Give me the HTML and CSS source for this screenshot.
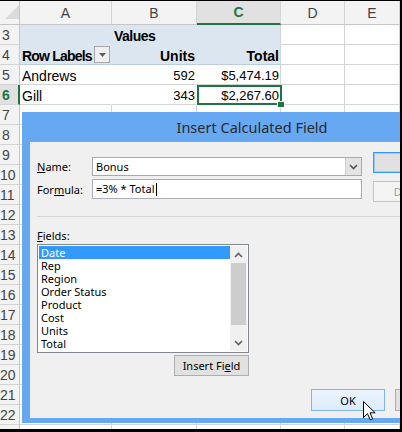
FILE: index.html
```html
<!DOCTYPE html>
<html>
<head>
<meta charset="utf-8">
<link rel="stylesheet" href="styles.css">
</head>
<body>
<div class="screen">
  <div class="sheet">
    <div class="corner"><svg width="14" height="14" viewBox="0 0 14 14"><path d="M14 0V14H0Z" fill="#dadada"/></svg></div>
    <div class="ch">A</div><div class="ch">B</div><div class="ch on">C</div><div class="ch">D</div><div class="ch">E</div>

    <div class="rh">3</div><div class="c pv"></div><div class="c pv b vals">Values</div><div class="c pv pe"></div><div class="c"></div><div class="c"></div>
    <div class="rh">4</div><div class="c pv p4 b rl"><span class="rltxt">Row Labels</span><span class="filt"><svg width="7" height="4" viewBox="0 0 7 4"><path d="M0 0H7L3.5 4Z" fill="#606060"/></svg></span></div><div class="c pv p4 b r">Units</div><div class="c pv p4 pe b r">Total</div><div class="c"></div><div class="c"></div>
    <div class="rh">5</div><div class="c nv">Andrews</div><div class="c nv r num">592</div><div class="c r num">$5,474.19</div><div class="c"></div><div class="c"></div>
    <div class="rh on">6</div><div class="c nv">Gill</div><div class="c nv r num">343</div><div class="c r num sel">$2,267.60</div><div class="c"></div><div class="c"></div>
    <div class="rh">7</div><div class="c"></div><div class="c"></div><div class="c"></div><div class="c"></div><div class="c"></div>
    <div class="rh">8</div><div class="c"></div><div class="c"></div><div class="c"></div><div class="c"></div><div class="c"></div>
    <div class="rh">9</div><div class="c"></div><div class="c"></div><div class="c"></div><div class="c"></div><div class="c"></div>
    <div class="rh">10</div><div class="c"></div><div class="c"></div><div class="c"></div><div class="c"></div><div class="c"></div>
    <div class="rh">11</div><div class="c"></div><div class="c"></div><div class="c"></div><div class="c"></div><div class="c"></div>
    <div class="rh">12</div><div class="c"></div><div class="c"></div><div class="c"></div><div class="c"></div><div class="c"></div>
    <div class="rh">13</div><div class="c"></div><div class="c"></div><div class="c"></div><div class="c"></div><div class="c"></div>
    <div class="rh">14</div><div class="c"></div><div class="c"></div><div class="c"></div><div class="c"></div><div class="c"></div>
    <div class="rh">15</div><div class="c"></div><div class="c"></div><div class="c"></div><div class="c"></div><div class="c"></div>
    <div class="rh">16</div><div class="c"></div><div class="c"></div><div class="c"></div><div class="c"></div><div class="c"></div>
    <div class="rh">17</div><div class="c"></div><div class="c"></div><div class="c"></div><div class="c"></div><div class="c"></div>
    <div class="rh">18</div><div class="c"></div><div class="c"></div><div class="c"></div><div class="c"></div><div class="c"></div>
    <div class="rh">19</div><div class="c"></div><div class="c"></div><div class="c"></div><div class="c"></div><div class="c"></div>
    <div class="rh">20</div><div class="c"></div><div class="c"></div><div class="c"></div><div class="c"></div><div class="c"></div>
    <div class="rh">21</div><div class="c"></div><div class="c"></div><div class="c"></div><div class="c"></div><div class="c"></div>
    <div class="rh">22</div><div class="c"></div><div class="c"></div><div class="c"></div><div class="c"></div><div class="c"></div>
    <div class="rh">23</div><div class="c"></div><div class="c"></div><div class="c"></div><div class="c"></div><div class="c"></div>
  </div>

  <div class="dlg">
    <div class="title">Insert Calculated Field</div>
    <div class="body">
      <div class="top">
        <div class="form">
          <div class="lbl"><u>N</u>ame:</div>
          <div class="combo"><span class="val">Bonus</span><span class="dd"><svg width="9" height="6" viewBox="0 0 9 6"><path d="M1 1L4.5 4.5L8 1" fill="none" stroke="#555" stroke-width="1.6"/></svg></span></div>
          <div class="lbl">For<u>m</u>ula:</div>
          <div class="input">=3% * Total<span class="caret"></span></div>
        </div>
        <div class="side">
          <div class="btn def">Add</div>
          <div class="btn dis">Delete</div>
        </div>
      </div>
      <div class="sep"></div>
      <div class="lbl flabel"><u>F</u>ields:</div>
      <div class="fieldarea">
        <div class="list">
          <div class="items">
            <div class="item sel">Date</div>
            <div class="item">Rep</div>
            <div class="item">Region</div>
            <div class="item">Order Status</div>
            <div class="item">Product</div>
            <div class="item">Cost</div>
            <div class="item">Units</div>
            <div class="item">Total</div>
          </div>
          <div class="sb">
            <div class="sbbtn"><svg width="9" height="6" viewBox="0 0 9 6"><path d="M1 5L4.5 1.5L8 5" fill="none" stroke="#606060" stroke-width="1.6"/></svg></div>
            <div class="thumb"></div>
            <div class="track"></div>
            <div class="sbbtn"><svg width="9" height="6" viewBox="0 0 9 6"><path d="M1 1L4.5 4.5L8 1" fill="none" stroke="#606060" stroke-width="1.6"/></svg></div>
          </div>
        </div>
        <div class="btn ins">Insert Fi<u>e</u>ld</div>
      </div>
      <div class="actions">
        <div class="btn ok">OK</div>
        <div class="btn cancel">Cancel</div>
      </div>
    </div>
  </div>

  <svg class="cursor" width="13" height="20" viewBox="0 0 13 20"><path d="M0.5 0.5V16.5L4.5 12.7L7.2 18.8L9.6 17.8L7 11.8H12.2Z" fill="#fff" stroke="#000" stroke-width="1" stroke-linejoin="miter"/></svg>
</div>
</body>
</html>
```

FILE: styles.css
```css
* { box-sizing: border-box; }
html, body { margin: 0; padding: 0; background: #000; }
body { width: 402px; height: 432px; overflow: hidden; }

.screen {
  position: relative;
  width: 402px;
  height: 432px;
  border-top: 1px solid #000;
  border-right: 2px solid #000;
  border-bottom: 3px solid #000;
  background: #fff;
  overflow: hidden;
  font-family: "Liberation Sans", Arial, sans-serif;
}

/* ---------- spreadsheet ---------- */
.sheet {
  display: grid;
  grid-template-columns: 20px 92px 85px 84px 64px 55px;
  grid-template-rows: 24px;
  grid-auto-rows: 20px;
}
.corner {
  background: #f3f3f3;
  border-right: 1px solid #c6c6c6;
  border-bottom: 1px solid #c6c6c6;
  padding: 4px 0 0 5px;
}
.corner svg { display: block; }
.ch {
  background: #f3f3f3;
  border-right: 1px solid #d4d4d4;
  border-bottom: 1px solid #c6c6c6;
  color: #444;
  font-size: 14px;
  display: flex;
  align-items: center;
  justify-content: center;
}
.ch.on {
  background: #e1e1e1;
  color: #217346;
  font-weight: bold;
  border-bottom: 2px solid #217346;
}
.rh {
  background: #f3f3f3;
  border-right: 1px solid #c6c6c6;
  border-bottom: 1px solid #d4d4d4;
  color: #444;
  font-size: 14px;
  text-align: center;
  padding-right: 7px;
  line-height: 20px;
  white-space: nowrap;
}
.rh.on {
  background: #e1e1e1;
  color: #217346;
  font-weight: bold;
  border-right: 2px solid #217346;
  padding-right: 6px;
}
.c {
  border-right: 1px solid #d4d4d4;
  border-bottom: 1px solid #d4d4d4;
  font-size: 14px;
  line-height: 16px;
  display: flex;
  align-items: flex-end;
  padding: 0 1px 0 2px;
  white-space: nowrap;
  color: #000;
}
.c.r { justify-content: flex-end; }
.c.b { font-weight: bold; }
.c.num { font-size: 13px; }
.c.pv { background: #dce6f1; border-right-color: #dce6f1; border-bottom-color: #dce6f1; }
.c.pv.pe { border-right-color: #d4d4d4; }
.c.p4 { border-bottom-color: #b8cce4; }
.c.nv { border-right-color: #fff; }
.vals { letter-spacing: -0.5px; }
.rl { justify-content: space-between; padding-right: 1px; }
.rltxt { letter-spacing: -0.8px; }
.filt {
  width: 16px;
  height: 17px;
  margin-bottom: 1px;
  border: 1px solid #a6a6a6;
  background: #f0f0f0;
  display: flex;
  align-items: center;
  justify-content: center;
}
.filt svg { display: block; }
.sel { position: relative; }
.sel::before {
  content: "";
  position: absolute;
  top: 0;
  left: 0;
  right: -2px;
  bottom: -1px;
  border: 2px solid #217346;
}
.sel::after {
  content: "";
  position: absolute;
  right: -4px;
  bottom: -3px;
  width: 6px;
  height: 5px;
  background: #217346;
  outline: 1px solid #fff;
}

/* ---------- dialog ---------- */
.dlg {
  position: absolute;
  left: 22px;
  top: 111px;
  width: 460px;
  height: 311px;
  background: #66a8f2;
  padding: 0 8px 5px;
  display: flex;
  flex-direction: column;
  font-family: "Noto Sans", "Open Sans", sans-serif;
  font-size: 11px;
  color: #000;
}
.title {
  height: 30px;
  flex: none;
  display: flex;
  align-items: center;
  justify-content: center;
  font-size: 14.5px;
  color: #2a2a2a;
}
.body {
  flex: 1;
  background: #f0f0f0;
  padding: 10px 4px 0 7px;
}
.top { display: flex; align-items: flex-start; }
.form {
  display: grid;
  grid-template-columns: 55px 270px;
  row-gap: 3px;
  align-items: center;
  margin-top: 5px;
}
.lbl { line-height: 15px; }
.combo {
  height: 19px;
  border: 1px solid #a9a9a9;
  background: #fff;
  display: flex;
}
.combo .val { flex: 1; padding-left: 3px; line-height: 17px; }
.dd {
  width: 16px;
  background: #e3e3e3;
  border-left: 1px solid #cfcfcf;
  display: flex;
  align-items: center;
  justify-content: center;
}
.dd svg, .sbbtn svg { display: block; }
.input {
  height: 20px;
  border: 1px solid #abadb3;
  background: #fff;
  padding-left: 3px;
  line-height: 18px;
  white-space: nowrap;
}
.caret {
  display: inline-block;
  width: 1px;
  height: 13px;
  background: #000;
  vertical-align: -3px;
  margin-left: 1px;
}
.side {
  margin-left: 11px;
  display: flex;
  flex-direction: column;
  gap: 8px;
}
.btn {
  width: 75px;
  height: 21px;
  flex: none;
  border: 1px solid #adadad;
  background: #e1e1e1;
  display: flex;
  align-items: center;
  justify-content: center;
  white-space: nowrap;
}
.btn.def { border-color: #3399ff; box-shadow: inset 0 0 0 1px #99ccff; }
.btn.dis { background: #f4f4f4; border-color: #c4c4c4; color: #a0a0a0; }
.sep { margin-top: 14px; height: 1px; background: #d5d5d5; margin-right: -4px; }
.flabel { margin-top: 11px; }
.fieldarea {
  width: 212px;
  margin-top: 1px;
  display: flex;
  flex-direction: column;
  align-items: flex-end;
}
.list {
  width: 212px;
  height: 109px;
  border: 1px solid #828790;
  background: #fff;
  padding: 1px;
  display: flex;
}
.items { flex: 1; }
.item { height: 13px; line-height: 13px; padding-left: 2px; white-space: nowrap; }
.item.sel { background: #3399ff; color: #fff; }
.item.sel::before, .item.sel::after { display: none; }
.sb { width: 17px; background: #f0f0f0; display: flex; flex-direction: column; }
.sbbtn { height: 17px; display: flex; align-items: center; justify-content: center; }
.thumb { height: 62px; margin: 0 1px; background: #cdcdcd; }
.track { flex: 1; }
.btn.ins { margin-top: 2px; }
.actions {
  display: flex;
  justify-content: flex-end;
  gap: 10px;
  margin-top: 13px;
}
.btn.ok {
  width: 74px;
  height: 22px;
  border-color: #7eb4ea;
  background: linear-gradient(#ecf4fc, #dcecfc);
}
.btn.cancel { height: 22px; }

.cursor {
  position: absolute;
  left: 363px;
  top: 400px;
}
```
